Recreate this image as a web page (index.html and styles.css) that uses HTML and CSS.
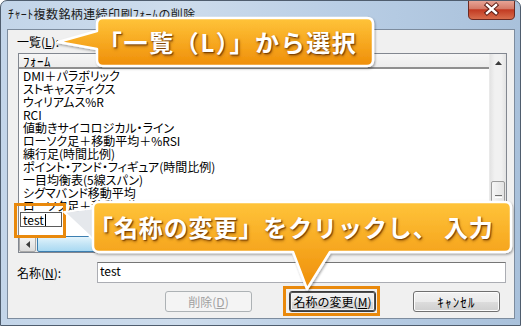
FILE: index.html
```html
<!DOCTYPE html>
<html lang="ja">
<head>
<meta charset="utf-8">
<title>ﾁｬｰﾄ複数銘柄連続印刷ﾌｫｰﾑの削除</title>
<link rel="stylesheet" href="styles.css">
</head>
<body>
<div class="window">
  <div class="titlebar">
    <span class="title">ﾁｬｰﾄ複数銘柄連続印刷ﾌｫｰﾑの削除</span>
    <div class="close">
      <svg width="47" height="20" viewBox="0 0 47 20">
        <defs>
          <linearGradient id="cg" x1="0" y1="0" x2="0" y2="1">
            <stop offset="0" stop-color="#e9a99b"/>
            <stop offset="0.45" stop-color="#d47a68"/>
            <stop offset="0.5" stop-color="#c23a22"/>
            <stop offset="1" stop-color="#d9704f"/>
          </linearGradient>
        </defs>
        <path d="M0.5,0 V15 Q0.5,19.5 5,19.5 H42 Q46.5,19.5 46.5,15 V0 Z" fill="url(#cg)" stroke="#6b2a22" stroke-width="1"/>
        <path d="M19,5 L28,13 M28,5 L19,13" stroke="#5a1c14" stroke-width="4.4" stroke-linecap="square"/>
        <path d="M19,5 L28,13 M28,5 L19,13" stroke="#ffffff" stroke-width="2.4" stroke-linecap="square"/>
      </svg>
    </div>
  </div>
  <div class="client">
    <div class="list-label">一覧(<u>L</u>):</div>
    <div class="listbox">
      <div class="list-top">
        <div class="list-area">
          <div class="list-header">ﾌｫｰﾑ</div>
          <div class="list-rows">
            <div class="row">DMI＋パラボリック</div>
            <div class="row">ストキャスティクス</div>
            <div class="row">ウィリアムス%R</div>
            <div class="row">RCI</div>
            <div class="row">値動きサイコロジカル・ライン</div>
            <div class="row">ローソク足＋移動平均＋%RSI</div>
            <div class="row">練行足(時間比例)</div>
            <div class="row">ポイント・アンド・フィギュア(時間比例)</div>
            <div class="row">一目均衡表(5線スパン)</div>
            <div class="row">シグマバンド移動平均</div>
            <div class="row">ローソク足＋移動平均</div>
            <div class="row row-edit"><span class="edit">test<span class="caret"></span></span></div>
          </div>
        </div>
        <div class="vscroll">
          <div class="sb-btn">
            <svg width="7" height="4" viewBox="0 0 7 4"><path d="M0,4 L3.5,0 L7,4 Z" fill="#3c3c3c"/></svg>
          </div>
          <div class="vtrack"><div class="vthumb"><span class="grip"></span></div></div>
          <div class="sb-btn">
            <svg width="7" height="4" viewBox="0 0 7 4"><path d="M0,0 L3.5,4 L7,0 Z" fill="#3c3c3c"/></svg>
          </div>
        </div>
      </div>
      <div class="hscroll">
        <div class="sb-btn hbtn">
          <svg width="4" height="7" viewBox="0 0 4 7"><path d="M4,0 L0,3.5 L4,7 Z" fill="#3c3c3c"/></svg>
        </div>
        <div class="htrack"><div class="hthumb"></div></div>
        <div class="corner"></div>
      </div>
    </div>
    <div class="name-row">
      <span class="name-label">名称(<u>N</u>):</span>
      <div class="input">test</div>
    </div>
    <div class="buttons">
      <div class="btn disabled">削除(<u>D</u>)</div>
      <div class="btn default">名称の変更(<u>M</u>)</div>
      <div class="btn btn-cancel">ｷｬﾝｾﾙ</div>
    </div>
  </div>

  <div class="hl hl-test"></div>
  <div class="hl hl-btn"></div>

  <svg class="callouts" width="522" height="326" viewBox="0 0 522 326">
    <defs>
      <linearGradient id="og" x1="0" y1="0" x2="0" y2="1">
        <stop offset="0" stop-color="#ffc43a"/>
        <stop offset="1" stop-color="#ef8e08"/>
      </linearGradient>
      <filter id="sh" x="-10%" y="-20%" width="120%" height="150%">
        <feDropShadow dx="1" dy="1.5" stdDeviation="1.2" flood-color="#000" flood-opacity="0.35"/>
      </filter>
    </defs>
    <path d="M103,18 H367 Q373,18 373,24 V60 Q373,66 367,66 H103 Q97,66 97,60 V49 L58,42 L97,31 V24 Q97,18 103,18 Z"
          fill="url(#og)" stroke="#ffffff" stroke-width="2.5" stroke-linejoin="round" filter="url(#sh)"/>
    <path d="M64,212 L96,208 L96,242 Z" fill="#e3e6ea" fill-opacity="0.92" stroke="#ffffff" stroke-width="2" stroke-linejoin="round"/>
    <path d="M99,202 H505 Q511,202 511,208 V246 Q511,252 505,252 H330 L307,289 L293,252 H99 Q93,252 93,246 V208 Q93,202 99,202 Z"
          fill="url(#og)" stroke="#ffffff" stroke-width="2.5" stroke-linejoin="round" filter="url(#sh)"/>
  </svg>
  <div class="callout-text ct1">「一覧（L）」から選択</div>
  <div class="callout-text ct2">「名称の変更」をクリックし、 入力</div>
</div>
</body>
</html>
```

FILE: styles.css
```css
html, body {
  margin: 0;
  padding: 0;
  background: #ffffff;
}

body {
  font-family: "Noto Sans CJK JP", "Noto Sans", sans-serif;
  font-size: 12px;
  color: #000;
}

.window {
  position: relative;
  width: 521px;
  height: 326px;
  box-sizing: border-box;
  border: 1px solid #4f5d6e;
  border-radius: 7px 7px 0 0;
  background: linear-gradient(to right, #c3d5e9 0%, #cddcec 35%, #b9cee5 65%, #a9c1db 100%);
  display: flex;
  flex-direction: column;
  overflow: hidden;
}

.titlebar {
  height: 28px;
  display: flex;
  align-items: flex-start;
  justify-content: space-between;
  flex: none;
}

.title {
  margin: 5px 0 0 7px;
  font-size: 12px;
  line-height: 16px;
  letter-spacing: 0.4px;
  color: #1b1b1b;
  white-space: nowrap;
}

.close {
  margin: -1px 5px 0 0;
  height: 20px;
  line-height: 0;
}

.client {
  margin: 0 5px 0 6px;
  height: 290px;
  box-sizing: border-box;
  border: 1px solid #7d8c9e;
  background: #f0f0f0;
  display: flex;
  flex-direction: column;
  flex: none;
}

.list-label {
  margin: 5px 0 0 9px;
  line-height: 14px;
  height: 14px;
}

u {
  text-decoration: underline;
  text-underline-offset: 1px;
}

.listbox {
  margin: 4px 0 0 10px;
  width: 489px;
  height: 200px;
  box-sizing: border-box;
  border: 1px solid #828790;
  background: #fff;
  display: flex;
  flex-direction: column;
}

.list-top {
  height: 182px;
  display: flex;
}

.list-area {
  flex: 1;
  display: flex;
  flex-direction: column;
  overflow: hidden;
}

.list-header {
  height: 13px;
  line-height: 13px;
  padding-left: 4px;
  font-size: 13px;
  letter-spacing: 0.5px;
  background: linear-gradient(#f6f6f6, #ececec);
  border-bottom: 2px solid #8f8f8f;
  flex: none;
}

.list-rows {
  flex: 1;
  overflow: hidden;
}

.row {
  height: 13px;
  line-height: 13px;
  padding-left: 4px;
  white-space: nowrap;
  font-feature-settings: "palt";
}

.row-edit {
  padding-left: 1px;
}

.edit {
  display: inline-flex;
  align-items: center;
  box-sizing: border-box;
  width: 42px;
  height: 15px;
  padding-left: 2px;
  border: 1px solid #5a5a5a;
  background: #fff;
  line-height: 13px;
}

.caret {
  display: inline-block;
  width: 1px;
  height: 12px;
  margin-left: 1px;
  background: #000;
}

.vscroll {
  width: 17px;
  display: flex;
  flex-direction: column;
  background: linear-gradient(to right, #e3e3e3, #f1f1f1 30%, #f1f1f1 70%, #e3e3e3);
  border-left: 1px solid #e9e9e9;
  box-sizing: border-box;
}

.sb-btn {
  height: 17px;
  display: flex;
  align-items: center;
  justify-content: center;
  flex: none;
}

.vtrack {
  flex: 1;
}

.vthumb {
  margin: 110px 1px 0 1px;
  height: 30px;
  box-sizing: border-box;
  border: 1px solid #9b9b9b;
  border-radius: 2px;
  background: linear-gradient(to right, #f6f6f6, #e3e3e3);
  display: flex;
  align-items: center;
  justify-content: center;
}

.grip {
  width: 7px;
  height: 1px;
  border-top: 1px solid #707070;
  border-bottom: 1px solid #fff;
}

.hscroll {
  height: 16px;
  display: flex;
  background: linear-gradient(#e3e3e3, #f1f1f1 40%, #e8e8e8);
}

.hbtn {
  width: 17px;
  height: 16px;
  box-sizing: border-box;
  border: 1px solid #a9a9a9;
  border-radius: 2px;
  background: linear-gradient(#f4f4f4, #dcdcdc);
}

.htrack {
  flex: 1;
  padding-left: 1px;
}

.hthumb {
  width: 220px;
  height: 16px;
  box-sizing: border-box;
  border: 1px solid #3c7fb1;
  border-radius: 2px;
  background: linear-gradient(#e3f4fc, #c4e5f6 50%, #a9d9f2);
}

.corner {
  width: 17px;
  background: #f0f0f0;
}

.name-row {
  margin: 9px 0 0 9px;
  height: 21px;
  display: flex;
  align-items: center;
}

.name-label {
  width: 80px;
  line-height: 14px;
  margin-top: 1px;
}

.input {
  width: 409px;
  height: 21px;
  box-sizing: border-box;
  border: 1px solid #abadb3;
  border-top-color: #767676;
  background: #fff;
  padding: 1px 0 0 2px;
  line-height: 14px;
}

.buttons {
  margin-top: 8px;
  padding-right: 14px;
  display: flex;
  justify-content: flex-end;
  gap: 37px;
}

.btn {
  width: 87px;
  height: 21px;
  box-sizing: border-box;
  border: 1px solid #707070;
  border-radius: 3px;
  background: linear-gradient(#f2f2f2 0%, #ebebeb 50%, #dddddd 51%, #cfcfcf 100%);
  box-shadow: inset 0 0 0 1px #fcfcfc;
  display: flex;
  align-items: center;
  justify-content: center;
  line-height: 14px;
}

.btn-cancel {
  font-size: 13px;
  letter-spacing: 1.2px;
}

.btn.default {
  border-color: #3c3c3c;
  box-shadow: inset 0 0 0 1px #505050, inset 0 0 0 2px #f4f4f4;
}

.btn.disabled {
  color: #a0a0a0;
  border-color: #adb2b5;
  background: #f4f4f4;
  box-shadow: none;
}

/* orange highlight frames */
.hl {
  position: absolute;
  box-sizing: border-box;
  border: 3px solid #e9890c;
}

.hl-test {
  left: 13px;
  top: 202px;
  width: 52px;
  height: 35px;
}

.hl-btn {
  left: 282px;
  top: 285px;
  width: 97px;
  height: 30px;
}

.callouts {
  position: absolute;
  left: -1px;
  top: -1px;
}

.callout-text {
  position: absolute;
  color: #fff;
  font-family: "Noto Sans CJK JP", sans-serif;
  font-weight: 700;
  white-space: nowrap;
  text-shadow: 1px 1px 1px rgba(110, 55, 0, 0.85), 1px 2px 3px rgba(120, 60, 0, 0.6);
}

.ct1 {
  left: 97px;
  top: 17px;
  height: 48px;
  line-height: 48px;
  font-size: 24px;
  letter-spacing: 1.6px;
}

.ct2 {
  left: 88px;
  top: 201px;
  height: 50px;
  line-height: 50px;
  font-size: 24px;
  letter-spacing: 0.9px;
}
```
